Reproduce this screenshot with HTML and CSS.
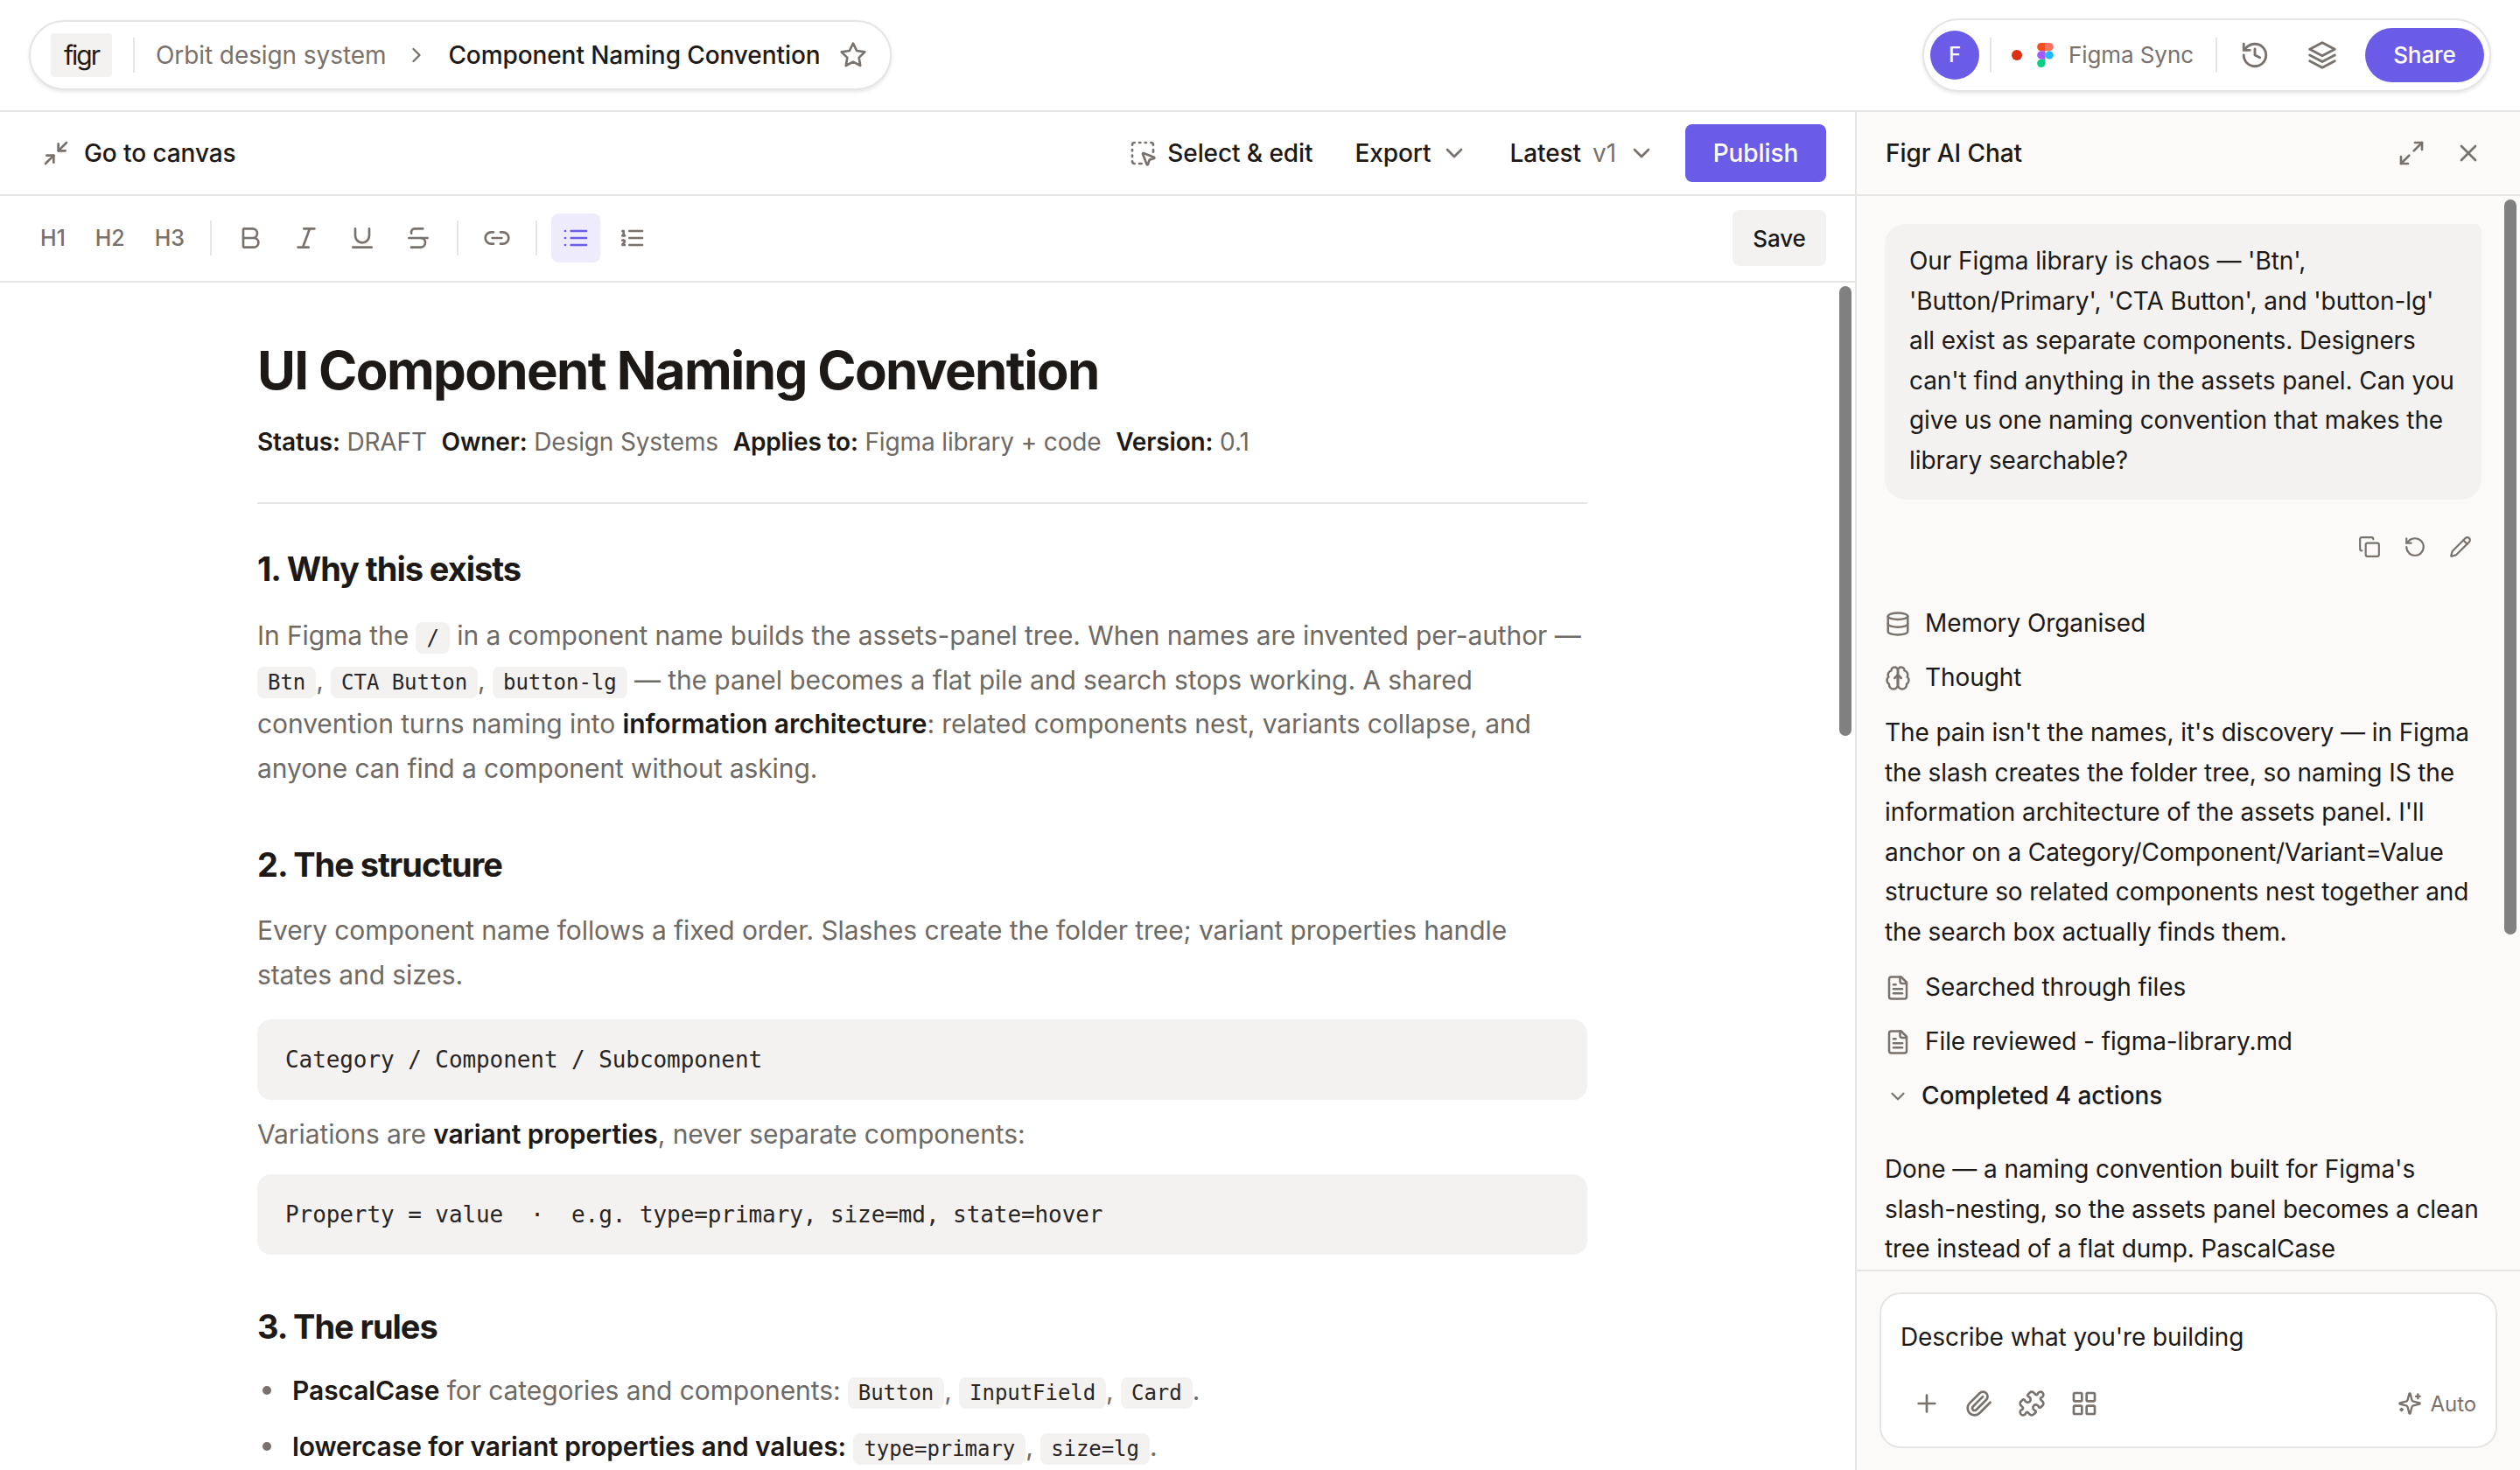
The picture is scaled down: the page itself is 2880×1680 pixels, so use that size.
FILE: index.html
```html
<!DOCTYPE html>
<html lang="en">

<head>
    <meta charset="UTF-8">
    <title>Component Naming Convention</title>
    <link rel="stylesheet" href="styles.css">
</head>

<body>
    <svg class="sprite" aria-hidden="true">
        <symbol id="i-star" viewBox="0 0 24 24"><polygon points="12 2 15.09 8.26 22 9.27 17 14.14 18.18 21.02 12 17.77 5.82 21.02 7 14.14 2 9.27 8.91 8.26 12 2"/></symbol>
        <symbol id="i-right" viewBox="0 0 24 24"><path d="m9 18 6-6-6-6"/></symbol>
        <symbol id="i-down" viewBox="0 0 24 24"><path d="m6 9 6 6 6-6"/></symbol>
        <symbol id="i-min" viewBox="0 0 24 24"><path d="m14 10 7-7"/><path d="M20 10h-6V4"/><path d="m3 21 7-7"/><path d="M4 14h6v6"/></symbol>
        <symbol id="i-max" viewBox="0 0 24 24"><path d="M15 3h6v6"/><path d="m21 3-7 7"/><path d="m3 21 7-7"/><path d="M9 21H3v-6"/></symbol>
        <symbol id="i-x" viewBox="0 0 24 24"><path d="M18 6 6 18"/><path d="m6 6 12 12"/></symbol>
        <symbol id="i-history" viewBox="0 0 24 24"><path d="M3 12a9 9 0 1 0 9-9 9.75 9.75 0 0 0-6.74 2.74L3 8"/><path d="M3 3v5h5"/><path d="M12 7v5l4 2"/></symbol>
        <symbol id="i-layers" viewBox="0 0 24 24"><path d="M12 2.500 21.500 7.500 12 12.500 2.500 7.500Z"/><path d="m2.500 12 9.500 5 9.500-5"/><path d="m2.500 16.500 9.500 5 9.500-5"/></symbol>
        <symbol id="i-bold" viewBox="0 0 24 24"><path d="M6 12h9a4 4 0 0 1 0 8H7a1 1 0 0 1-1-1V5a1 1 0 0 1 1-1h7a4 4 0 0 1 0 8"/></symbol>
        <symbol id="i-italic" viewBox="0 0 24 24"><path d="M19 4h-9"/><path d="M14 20H5"/><path d="M15 4 9 20"/></symbol>
        <symbol id="i-underline" viewBox="0 0 24 24"><path d="M6 4v6a6 6 0 0 0 12 0V4"/><path d="M4 20h16"/></symbol>
        <symbol id="i-strike" viewBox="0 0 24 24"><path d="M16 4H9a3 3 0 0 0-2.830 4"/><path d="M14 12a4 4 0 0 1 0 8H6"/><path d="M4 12h16"/></symbol>
        <symbol id="i-link" viewBox="0 0 24 24"><path d="M9 17H7A5 5 0 0 1 7 7h2"/><path d="M15 7h2a5 5 0 1 1 0 10h-2"/><path d="M8 12h8"/></symbol>
        <symbol id="i-list" viewBox="0 0 24 24"><path d="M3 12h.01"/><path d="M3 18h.01"/><path d="M3 6h.01"/><path d="M8 12h13"/><path d="M8 18h13"/><path d="M8 6h13"/></symbol>
        <symbol id="i-olist" viewBox="0 0 24 24"><path d="M10 12h11"/><path d="M10 18h11"/><path d="M10 6h11"/><path d="M4 10h2"/><path d="M4 6h1v4"/><path d="M6 18H4c0-1 2-2 2-3s-1-1.500-2-1"/></symbol>
        <symbol id="i-select" viewBox="0 0 24 24"><path d="M12.034 12.681a.498.498 0 0 1 .647-.647l9 3.500a.5.5 0 0 1-.033.943l-3.444 1.068a1 1 0 0 0-.66.66l-1.067 3.443a.5.5 0 0 1-.943.033z"/><path d="M5 3a2 2 0 0 0-2 2"/><path d="M19 3a2 2 0 0 1 2 2"/><path d="M5 21a2 2 0 0 1-2-2"/><path d="M9 3h1"/><path d="M9 21h2"/><path d="M14 3h1"/><path d="M3 9v1"/><path d="M21 9v2"/><path d="M3 14v1"/></symbol>
        <symbol id="i-copy" viewBox="0 0 24 24"><rect x="8" y="8" width="14" height="14" rx="2"/><path d="M4 16c-1.100 0-2-.9-2-2V4c0-1.100.9-2 2-2h10c1.100 0 2 .9 2 2"/></symbol>
        <symbol id="i-undo" viewBox="0 0 24 24"><path d="M3 12a9 9 0 1 0 9-9 9.750 9.750 0 0 0-6.740 2.740L3 8"/><path d="M3 3v5h5"/></symbol>
        <symbol id="i-pencil" viewBox="0 0 24 24"><path d="M21.174 6.812a1 1 0 0 0-3.986-3.987L3.842 16.174a2 2 0 0 0-.5.83l-1.321 4.352a.5.5 0 0 0 .623.622l4.353-1.320a2 2 0 0 0 .83-.497z"/><path d="m15 5 4 4"/></symbol>
        <symbol id="i-db" viewBox="0 0 24 24"><ellipse cx="12" cy="5" rx="9" ry="3"/><path d="M3 5v14a9 3 0 0 0 18 0V5"/><path d="M3 12a9 3 0 0 0 18 0"/></symbol>
        <symbol id="i-brain" viewBox="0 0 24 24"><path d="M12 5a3 3 0 1 0-5.997.125 4 4 0 0 0-2.526 5.770 4 4 0 0 0 .556 6.588A4 4 0 1 0 12 18Z"/><path d="M12 5a3 3 0 1 1 5.997.125 4 4 0 0 1 2.526 5.770 4 4 0 0 1-.556 6.588A4 4 0 1 1 12 18Z"/><path d="M12 18V9"/><path d="m9 12 3-3 3 3"/></symbol>
        <symbol id="i-file" viewBox="0 0 24 24"><path d="M15 2H6a2 2 0 0 0-2 2v16a2 2 0 0 0 2 2h12a2 2 0 0 0 2-2V7Z"/><path d="M14 2v4a2 2 0 0 0 2 2h4"/><path d="M10 9H8"/><path d="M16 13H8"/><path d="M16 17H8"/></symbol>
        <symbol id="i-plus" viewBox="0 0 24 24"><path d="M5 12h14"/><path d="M12 5v14"/></symbol>
        <symbol id="i-clip" viewBox="0 0 24 24"><path d="m21.440 11.050-9.190 9.190a6 6 0 0 1-8.490-8.490l8.570-8.570A4 4 0 1 1 18 8.840l-8.590 8.570a2 2 0 0 1-2.830-2.830l8.490-8.480"/></symbol>
        <symbol id="i-puzzle" viewBox="0 0 24 24"><path d="M19.439 7.850c-.049.322.059.648.289.878l1.568 1.568c.47.47.706 1.087.706 1.704s-.235 1.233-.706 1.704l-1.611 1.611a.98.98 0 0 1-.837.276c-.47-.07-.802-.48-.968-.925a2.501 2.501 0 1 0-3.214 3.214c.446.166.855.497.925.968a.979.979 0 0 1-.276.837l-1.610 1.610a2.404 2.404 0 0 1-1.705.707 2.402 2.402 0 0 1-1.704-.706l-1.568-1.568a1.026 1.026 0 0 0-.877-.29c-.493.074-.84.504-1.020.968a2.500 2.500 0 1 1-3.237-3.237c.464-.18.894-.527.967-1.020a1.026 1.026 0 0 0-.289-.877l-1.568-1.568A2.402 2.402 0 0 1 1.998 12c0-.617.236-1.234.706-1.704L4.230 8.770c.24-.24.581-.353.917-.303.515.077.877.528 1.073 1.010a2.500 2.500 0 1 0 3.259-3.259c-.482-.196-.933-.558-1.010-1.073-.05-.336.062-.676.303-.917l1.525-1.525A2.402 2.402 0 0 1 12 1.998c.617 0 1.234.236 1.704.706l1.568 1.568c.23.23.556.338.877.29.493-.074.84-.504 1.020-.968a2.500 2.500 0 1 1 3.237 3.237c-.464.18-.894.527-.967 1.020Z"/></symbol>
        <symbol id="i-grid" viewBox="0 0 24 24"><rect x="3" y="3" width="7" height="7" rx="1"/><rect x="14" y="3" width="7" height="7" rx="1"/><rect x="14" y="14" width="7" height="7" rx="1"/><rect x="3" y="14" width="7" height="7" rx="1"/></symbol>
        <symbol id="i-spark" viewBox="0 0 24 24"><path d="M9.937 15.500A2 2 0 0 0 8.500 14.063l-6.135-1.582a.5.5 0 0 1 0-.962L8.500 9.936A2 2 0 0 0 9.937 8.500l1.582-6.135a.5.5 0 0 1 .963 0L14.063 8.500A2 2 0 0 0 15.500 9.937l6.135 1.581a.5.5 0 0 1 0 .964L15.500 14.063a2 2 0 0 0-1.437 1.437l-1.582 6.135a.5.5 0 0 1-.963 0z"/><path d="M20 3v4"/><path d="M22 5h-4"/><path d="M4 17v2"/><path d="M5 18H3"/></symbol>
    </svg>

    <div class="app">
        <header class="topbar">
            <div class="pill pill-left">
                <div class="logo">figr</div>
                <span class="vline"></span>
                <span class="crumb">Orbit design system</span>
                <svg class="ic ic-crumb"><use href="#i-right"/></svg>
                <span class="crumb-now">Component Naming Convention</span>
                <svg class="ic ic-star"><use href="#i-star"/></svg>
            </div>
            <div class="pill pill-right">
                <div class="avatar">F</div>
                <span class="vline"></span>
                <span class="dot"></span>
                <svg class="figma" viewBox="0 0 38 57">
                    <path fill="#1abcfe" d="M19 28.500a9.500 9.500 0 1 1 19 0 9.500 9.500 0 0 1-19 0z"/>
                    <path fill="#0acf83" d="M0 47.500A9.500 9.500 0 0 1 9.500 38H19v9.500a9.500 9.500 0 1 1-19 0z"/>
                    <path fill="#ff7262" d="M19 0v19h9.500a9.500 9.500 0 1 0 0-19H19z"/>
                    <path fill="#f24e1e" d="M0 9.500A9.500 9.500 0 0 0 9.500 19H19V0H9.500A9.500 9.500 0 0 0 0 9.500z"/>
                    <path fill="#a259ff" d="M0 28.500A9.500 9.500 0 0 0 9.500 38H19V19H9.500A9.500 9.500 0 0 0 0 28.500z"/>
                </svg>
                <span class="sync">Figma Sync</span>
                <span class="vline vline-b"></span>
                <svg class="ic ic-top"><use href="#i-history"/></svg>
                <svg class="ic ic-top ic-layers"><use href="#i-layers"/></svg>
                <div class="share">Share</div>
            </div>
        </header>

        <div class="main">
            <section class="doc">
                <div class="toolbar">
                    <div class="back">
                        <svg class="ic ic-back"><use href="#i-min"/></svg>
                        <span>Go to canvas</span>
                    </div>
                    <div class="actions">
                        <div class="act act-select">
                            <svg class="ic ic-act"><use href="#i-select"/></svg>
                            <span>Select &amp; edit</span>
                        </div>
                        <div class="act act-export">
                            <span>Export</span>
                            <svg class="ic ic-act"><use href="#i-down"/></svg>
                        </div>
                        <div class="act act-latest">
                            <span>Latest</span>
                            <span class="ver">v1</span>
                            <svg class="ic ic-act"><use href="#i-down"/></svg>
                        </div>
                        <div class="publish">Publish</div>
                    </div>
                </div>

                <div class="formatbar">
                    <div class="tools">
                        <span class="hd">H1</span>
                        <span class="hd">H2</span>
                        <span class="hd">H3</span>
                        <span class="sep"></span>
                        <span class="tool"><svg class="ic ic-fmt"><use href="#i-bold"/></svg></span>
                        <span class="tool"><svg class="ic ic-fmt"><use href="#i-italic"/></svg></span>
                        <span class="tool"><svg class="ic ic-fmt"><use href="#i-underline"/></svg></span>
                        <span class="tool"><svg class="ic ic-fmt"><use href="#i-strike"/></svg></span>
                        <span class="sep"></span>
                        <span class="tool"><svg class="ic ic-fmt"><use href="#i-link"/></svg></span>
                        <span class="sep"></span>
                        <span class="tool active"><svg class="ic ic-fmt"><use href="#i-list"/></svg></span>
                        <span class="tool"><svg class="ic ic-fmt"><use href="#i-olist"/></svg></span>
                    </div>
                    <div class="save">Save</div>
                </div>

                <div class="paper">
                    <div class="thumb thumb-doc"></div>
                    <article class="sheet">
                        <h1>UI Component Naming Convention</h1>
                        <p class="meta"><b>Status:</b> DRAFT <i></i><b>Owner:</b> Design Systems <i></i><b>Applies to:</b> Figma library + code <i></i><b>Version:</b> 0.1</p>
                        <hr>
                        <h2>1. Why this exists</h2>
                        <p class="intro">In Figma the <code>/</code> in a component name builds the assets-panel tree. When names are invented per-author — <code>Btn</code>, <code>CTA Button</code>, <code>button-lg</code> — the panel becomes a flat pile and search stops working. A shared convention turns naming into <b>information architecture</b>: related components nest, variants collapse, and anyone can find a component without asking.</p>
                        <h2>2. The structure</h2>
                        <p>Every component name follows a fixed order. Slashes create the folder tree; variant properties handle states and sizes.</p>
                        <pre>Category / Component / Subcomponent</pre>
                        <p class="tight">Variations are <b>variant properties</b>, never separate components:</p>
                        <pre>Property = value  ·  e.g. type=primary, size=md, state=hover</pre>
                        <h2 class="h-rules">3. The rules</h2>
                        <ul>
                            <li><b>PascalCase</b> for categories and components: <code>Button</code>, <code>InputField</code>, <code>Card</code>.</li>
                            <li><b>lowercase for variant properties and values:</b> <code>type=primary</code>, <code>size=lg</code>.</li>
                        </ul>
                    </article>
                </div>
            </section>

            <aside class="chat">
                <div class="chat-head">
                    <span>Figr AI Chat</span>
                    <div class="chat-btns">
                        <svg class="ic ic-head"><use href="#i-max"/></svg>
                        <svg class="ic ic-head"><use href="#i-x"/></svg>
                    </div>
                </div>
                <div class="chat-body">
                    <div class="thumb thumb-chat"></div>
                    <div class="bubble">Our Figma library is chaos — 'Btn', 'Button/Primary', 'CTA Button', and 'button-lg' all exist as separate components. Designers can't find anything in the assets panel. Can you give us one naming convention that makes the library searchable?</div>
                    <div class="msg-tools">
                        <svg class="ic ic-msg"><use href="#i-copy"/></svg>
                        <svg class="ic ic-msg"><use href="#i-undo"/></svg>
                        <svg class="ic ic-msg"><use href="#i-pencil"/></svg>
                    </div>
                    <div class="step step-first"><svg class="ic ic-step"><use href="#i-db"/></svg><span>Memory Organised</span></div>
                    <div class="step"><svg class="ic ic-step"><use href="#i-brain"/></svg><span>Thought</span></div>
                    <p class="reply">The pain isn't the names, it's discovery — in Figma the slash creates the folder tree, so naming IS the information architecture of the assets panel. I'll anchor on a Category/Component/Variant=Value structure so related components nest together and the search box actually finds them.</p>
                    <div class="step"><svg class="ic ic-step"><use href="#i-file"/></svg><span>Searched through files</span></div>
                    <div class="step"><svg class="ic ic-step"><use href="#i-file"/></svg><span>File reviewed - figma-library.md</span></div>
                    <div class="step step-done"><svg class="ic ic-chev"><use href="#i-down"/></svg><span>Completed 4 actions</span></div>
                    <p class="reply reply-done">Done — a naming convention built for Figma's slash-nesting, so the assets panel becomes a clean tree instead of a flat dump. PascalCase</p>
                </div>
                <div class="chat-foot">
                    <div class="composer">
                        <div class="prompt">Describe what you're building</div>
                        <div class="composer-row">
                            <div class="composer-tools">
                                <svg class="ic ic-comp"><use href="#i-plus"/></svg>
                                <svg class="ic ic-comp"><use href="#i-clip"/></svg>
                                <svg class="ic ic-comp"><use href="#i-puzzle"/></svg>
                                <svg class="ic ic-comp"><use href="#i-grid"/></svg>
                            </div>
                            <div class="auto"><svg class="ic ic-auto"><use href="#i-spark"/></svg><span>Auto</span></div>
                        </div>
                    </div>
                </div>
            </aside>
        </div>
    </div>
</body>

</html>
```

FILE: styles.css
```css
* {
    margin: 0;
    padding: 0;
    box-sizing: border-box;
}

body {
    font-family: Inter, "Liberation Sans", sans-serif;
    font-size: 28px;
    letter-spacing: -.085px;
    color: #1c1917;
    background: #fff;
}

.sprite {
    display: none;
}

.app {
    display: flex;
    flex-direction: column;
    width: 2880px;
    height: 1680px;
    overflow: hidden;
}

.ic {
    display: block;
    flex: none;
    fill: none;
    stroke: #78716c;
    stroke-width: 2;
    stroke-linecap: round;
    stroke-linejoin: round;
}

/* top bar */
.topbar {
    display: flex;
    justify-content: space-between;
    align-items: center;
    height: 128px;
    padding: 0 33px 1px 33px;
    border-bottom: 2px solid #e7e5e4;
}

.pill {
    display: flex;
    align-items: center;
    height: 80px;
    background: #fff;
    border: 2px solid #e7e5e4;
    border-radius: 40px;
    box-shadow: 0 2px 4px rgba(0, 0, 0, .1);
}

.pill-left {
    width: 986px;
    padding-left: 23px;
}

.pill-right {
    width: 650px;
    height: 84px;
    border-radius: 42px;
    padding-left: 7px;
}

.logo {
    display: flex;
    align-items: center;
    justify-content: center;
    width: 70px;
    height: 50px;
    background: #f3f2f0;
    border-radius: 4px;
    font-size: 30px;
    letter-spacing: -2px;
}

.vline {
    flex: none;
    width: 2px;
    height: 40px;
    background: #e7e5e4;
    margin-left: 24px;
}

.crumb {
    margin-left: 24px;
    color: #78716c;
}

.ic-crumb {
    width: 28px;
    height: 28px;
    margin-left: 21px;
}

.crumb-now {
    margin-left: 22px;
    font-weight: 500;
}

.ic-star {
    width: 32px;
    height: 32px;
    margin-left: 22px;
}

.avatar {
    display: flex;
    align-items: center;
    justify-content: center;
    width: 56px;
    height: 56px;
    border-radius: 50%;
    background: #6b5ce7;
    color: #fff;
    font-size: 24px;
    font-weight: 500;
}

.avatar + .vline {
    margin-left: 12px;
}

.dot {
    width: 12px;
    height: 12px;
    margin-left: 23px;
    border-radius: 50%;
    background: #dc2f12;
}

.figma {
    flex: none;
    width: 19px;
    height: 28px;
    margin-left: 17px;
}

.sync {
    margin-left: 17px;
    font-size: 26px;
    color: #78716c;
}

.vline-b {
    margin-left: 25px;
}

.ic-top {
    width: 34px;
    height: 34px;
    margin-left: 26px;
}

.ic-layers {
    width: 36px;
    height: 36px;
    margin-left: 42px;
}

.share {
    display: flex;
    align-items: center;
    justify-content: center;
    width: 136px;
    height: 62px;
    margin-left: 31px;
    background: #6b5ce7;
    color: #fff;
    border-radius: 31px;
    font-size: 26px;
    font-weight: 500;
}

/* main split */
.main {
    flex: 1;
    display: flex;
    min-height: 0;
}

.doc {
    flex: 1;
    display: flex;
    flex-direction: column;
    min-width: 0;
    border-right: 2px solid #e7e5e4;
}

.toolbar {
    flex: none;
    display: flex;
    justify-content: space-between;
    align-items: center;
    height: 96px;
    padding: 0 33px 0 48px;
    border-bottom: 2px solid #e7e5e4;
    font-weight: 500;
}

.back,
.actions,
.act {
    display: flex;
    align-items: center;
}

.ic-back {
    width: 32px;
    height: 32px;
    margin-right: 16px;
}

.ic-act {
    width: 32px;
    height: 32px;
}

.act-select span {
    margin-left: 12px;
}

.act-export {
    margin-left: 48px;
    gap: 11px;
}

.act-latest {
    margin-left: 47px;
    gap: 13px;
}

.ver {
    color: #78716c;
    font-weight: 400;
}

.publish {
    display: flex;
    align-items: center;
    justify-content: center;
    width: 161px;
    height: 66px;
    margin-left: 34px;
    background: #6b5ce7;
    color: #fff;
    border-radius: 8px;
}

.formatbar {
    flex: none;
    display: flex;
    justify-content: space-between;
    align-items: center;
    height: 99px;
    padding: 0 33px 1px 46px;
    border-bottom: 2px solid #e7e5e4;
}

.tools {
    display: flex;
    align-items: center;
}

.hd {
    margin-right: 34px;
    font-size: 25px;
    font-weight: 500;
    color: #78716c;
    white-space: nowrap;
}

.hd + .sep {
    margin-left: -5px;
}

.sep {
    width: 2px;
    height: 40px;
    margin: 0 16px;
    background: #e7e5e4;
}

.tool {
    display: flex;
    align-items: center;
    justify-content: center;
    width: 56px;
    height: 56px;
    margin-right: 8px;
    border-radius: 8px;
}

.tool + .sep {
    margin-left: 8px;
}

.ic-fmt {
    width: 32px;
    height: 32px;
}

.active {
    background: #eeebfc;
}

.active .ic {
    stroke: #6b5ce7;
}

.save {
    display: flex;
    align-items: center;
    justify-content: center;
    width: 107px;
    height: 64px;
    background: #f3f2f0;
    border-radius: 8px;
    font-size: 26px;
    font-weight: 500;
}

/* document */
.paper {
    flex: 1;
    position: relative;
    overflow: hidden;
    padding: 64px 0 0 294px;
}

.thumb {
    position: absolute;
    z-index: 1;
    width: 14px;
    border-radius: 7px;
    background: #808080;
}

.thumb-doc {
    top: 4px;
    right: 4px;
    height: 514px;
}

.sheet {
    width: 1520px;
}

h1 {
    font-size: 60px;
    font-weight: 700;
    line-height: 72px;
    letter-spacing: -1.65px;
}

.meta {
    margin-top: 24px;
    line-height: 44px;
    letter-spacing: -.14px;
}

.meta i {
    display: inline-block;
    width: 9px;
}

.sheet p,
.sheet li {
    color: #6e6a66;
}

.sheet b {
    color: #1c1917;
    font-weight: 600;
}

hr {
    margin-top: 47px;
    border: 0;
    border-top: 2px solid #e7e5e4;
}

h2 {
    margin-top: 50px;
    font-size: 38px;
    font-weight: 700;
    line-height: 48px;
    letter-spacing: -1.05px;
}

.sheet > p:not(.meta) {
    margin-top: 26px;
    font-size: 30px;
    line-height: 50.500px;
    letter-spacing: -.09px;
}

.sheet > p.intro {
    margin-top: 27px;
}

.sheet > p + h2 {
    margin-top: 61px;
}

code {
    font-family: "DejaVu Sans Mono", "Liberation Mono", monospace;
    font-size: 24px;
    line-height: 1;
    letter-spacing: -.05px;
    color: #292524;
    background: #f3f2f0;
    border-radius: 8px;
    padding: 4px 12px;
}

pre {
    margin-top: 26px;
    height: 92px;
    padding: 0 32px;
    background: #f3f2f0;
    border-radius: 16px;
    font-family: "DejaVu Sans Mono", "Liberation Mono", monospace;
    font-size: 26px;
    line-height: 92px;
    letter-spacing: -.08px;
    color: #292524;
}

.sheet > p.tight {
    margin-top: 14px;
}

.sheet > pre + p.tight + pre {
    margin-top: 20px;
}

.sheet > h2.h-rules {
    margin-top: 58px;
}

ul {
    margin-top: 24px;
    padding-left: 40px;
    list-style: none;
    font-size: 30px;
    letter-spacing: -.09px;
}

li {
    position: relative;
    line-height: 50px;
    margin-bottom: 14px;
}

li::before {
    content: "";
    position: absolute;
    left: -34px;
    top: 20px;
    width: 10px;
    height: 10px;
    border-radius: 50%;
    background: #78716c;
}

/* chat */
.chat {
    flex: none;
    width: 758px;
    display: flex;
    flex-direction: column;
    background: #fbfaf8;
}

.chat-head {
    flex: none;
    display: flex;
    justify-content: space-between;
    align-items: center;
    height: 96px;
    padding: 0 43px 0 33px;
    border-bottom: 2px solid #e7e5e4;
    font-weight: 500;
}

.chat-btns {
    display: flex;
    align-items: center;
    gap: 33px;
}

.ic-head {
    width: 32px;
    height: 32px;
}

.chat-body {
    flex: 1;
    position: relative;
    overflow: hidden;
    padding: 32px 44px 0 32px;
    min-height: 0;
    line-height: 45.500px;
}

.thumb-chat {
    top: 4px;
    right: 4px;
    height: 840px;
}

.bubble {
    padding: 20px 28px 22px;
    background: #f3f2f0;
    border-radius: 24px 8px 24px 24px;
}

.msg-tools {
    display: flex;
    justify-content: flex-end;
    gap: 26px;
    margin-top: 41px;
    padding-right: 11px;
}

.ic-msg {
    width: 26px;
    height: 26px;
}

.step {
    display: flex;
    align-items: center;
    gap: 16px;
    height: 46px;
    margin-top: 16px;
}

.step-first {
    margin-top: 52px;
}

.ic-step {
    width: 30px;
    height: 30px;
}

.step-done {
    font-weight: 500;
    gap: 14px;
}

.ic-chev {
    width: 26px;
    height: 26px;
    margin-left: 2px;
}

.reply {
    margin-top: 17px;
}

.reply + .step {
    margin-top: 18px;
}

.reply-done {
    margin-top: 38px;
}

.chat-foot {
    flex: none;
    height: 229px;
    padding: 24px 26px 0;
    border-top: 2px solid #e7e5e4;
}

.composer {
    height: 178px;
    padding: 0 22px 0 22px;
    background: #fff;
    border: 2px solid #e7e5e4;
    border-radius: 24px;
}

.prompt {
    padding-top: 27px;
    line-height: 44px;
}

.composer-row {
    display: flex;
    justify-content: space-between;
    align-items: center;
    margin-top: 38px;
}

.composer-tools {
    display: flex;
    align-items: center;
    gap: 28px;
    padding-left: 14px;
}

.ic-comp {
    width: 32px;
    height: 32px;
}

.auto {
    display: flex;
    align-items: center;
    gap: 10px;
    font-size: 24px;
    color: #78716c;
}

.ic-auto {
    width: 28px;
    height: 28px;
}
```
